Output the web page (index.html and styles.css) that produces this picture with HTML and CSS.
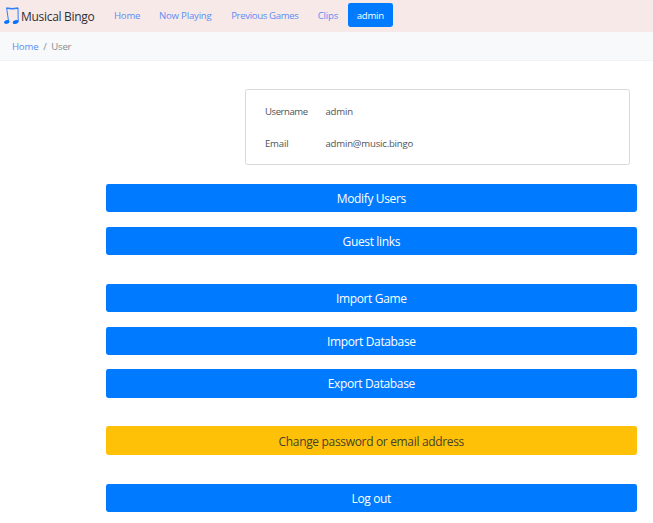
FILE: index.html
```html
<!DOCTYPE html>
<html lang="en">
<head>
<meta charset="utf-8">
<title>Musical Bingo</title>
<link rel="stylesheet" href="styles.css">
</head>
<body>
<nav class="navbar">
  <a class="brand">
    <svg class="logo" viewBox="0 0 16 18" width="16" height="18">
      <path d="M4.6 14.6 2.6 0.8Q8 2.2 14 0.8L14.2 14.5M2.8 1.4Q8 2.8 14 1.4" fill="none" stroke="#1673ff" stroke-width="0.9"/>
      <ellipse cx="2.8" cy="15" rx="2.8" ry="1.8" transform="rotate(-12 2.8 15)" fill="#0873ff"/>
      <ellipse cx="11.7" cy="15" rx="3" ry="1.9" transform="rotate(-18 11.7 15)" fill="#0873ff"/>
    </svg>
    <span class="brand-name">Musical Bingo</span>
  </a>
  <div class="nav-links">
    <a class="nav-link w-home">Home</a>
    <a class="nav-link w-playing">Now Playing</a>
    <a class="nav-link w-games">Previous Games</a>
    <a class="nav-link w-clips">Clips</a>
    <a class="nav-link active">admin</a>
  </div>
</nav>
<div class="breadcrumb"><a class="crumb-link">Home</a><span class="slash">/</span><span>User</span></div>
<main class="content">
  <dl class="card">
    <dt class="tight">Username</dt><dd>admin</dd>
    <dt>Email</dt><dd>admin@music.bingo</dd>
  </dl>
  <div class="actions">
    <div class="group"><button class="btn">Modify Users</button><button class="btn">Guest links</button></div>
    <div class="group"><button class="btn">Import Game</button><button class="btn">Import Database</button><button class="btn">Export Database</button></div>
    <div class="group"><button class="btn warning">Change password or email address</button></div>
    <div class="group"><button class="btn">Log out</button></div>
  </div>
</main>
</body>
</html>
```
FILE: styles.css
```css
* { box-sizing: border-box; }
body { margin: 0; height: 523px; overflow: hidden; background: #fff; color: #212529; font: 9.6px/14.4px "Open Sans", "Noto Sans", sans-serif; letter-spacing: -0.2px; }
.navbar { display: flex; align-items: center; height: 32px; background: #f8e9e9; }
.brand { display: flex; align-items: center; width: 104.4px; height: 30px; padding-left: 4px; }
.logo { flex: none; margin-right: 1px; }
.brand-name { font-size: 12px; letter-spacing: -0.3px; white-space: nowrap; padding-top: 2px; color: #303033; }
.nav-links { display: flex; height: 24px; margin-bottom: 2px; line-height: 24px; color: #5b8df5; }
.nav-link { padding: 1px 0 0 9.6px; white-space: nowrap; }
.w-home { width: 45px; }
.w-playing { width: 72.2px; }
.w-games { width: 86.5px; letter-spacing: -0.35px; }
.w-clips { width: 39.5px; }
.nav-link.active { width: 45.5px; padding: 1px 0 0; text-align: center; background: #007bff; color: #fff; border-radius: 2.4px; }
.breadcrumb { display: flex; height: 29px; padding: 1px 12px 0; line-height: 28px; background: #f8f9fb; border-bottom: 1px solid #f0f2f3; color: #858b91; }
.crumb-link { color: #5b8df5; }
.slash { padding: 0 4.8px; }
.content { padding: 28px 16px 0 105.6px; }
.card { display: grid; grid-template-columns: 60.5px 1fr; grid-template-rows: 32px 32px; width: 385px; height: 76px; margin: 0 0 0 139.4px; padding: 6px 19px; line-height: 32px; border: 1px solid #d9d9db; border-radius: 2.4px; color: #505356; }
.tight { letter-spacing: -0.45px; }
.card dd { margin: 0; }
.actions { display: flex; flex-direction: column; gap: 28.9px; margin-top: 19px; }
.group { display: flex; flex-direction: column; gap: 14.4px; }
.btn { width: 100%; height: 28.3px; padding: 1px 0 0; border: 0; border-radius: 2.4px; background: #007bff; color: #fff; font: 500 12px/27px "Open Sans", "Noto Sans", sans-serif; letter-spacing: -0.36px; }
.btn.warning { background: #ffc107; color: #45412e; font-weight: 400; letter-spacing: -0.33px; }
```
